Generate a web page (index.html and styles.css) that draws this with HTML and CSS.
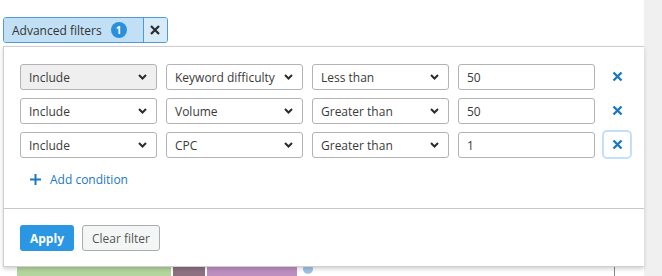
FILE: index.html
```html
<!DOCTYPE html>
<html lang="en">
<head>
    <meta charset="UTF-8">
    <title>Advanced filters</title>
    <link rel="stylesheet" href="styles.css">
</head>
<body>
    <div class="page">
        <div class="main">
            <div class="tag">
                <span class="tag-label">Advanced filters <span class="badge">1</span></span>
                <button class="tag-close" aria-label="Remove">
                    <svg width="10" height="10" viewBox="0 0 10 10"><path d="M1 1l8 8M9 1l-8 8" stroke="#2b2b2b" stroke-width="2.2"/></svg>
                </button>
            </div>

            <!-- content under the dropdown -->
            <div class="behind">
                <div class="chart">
                    <div class="bar bar-green"></div>
                    <div class="bar bar-mauve"></div>
                    <div class="bar bar-purple"></div>
                    <div class="dot"></div>
                </div>
                <div class="tick"></div>
            </div>

            <div class="panel">
                <div class="conditions">
                    <div class="row">
                        <div class="select hover"><span>Include</span><svg class="chev" width="9" height="6" viewBox="0 0 9 6"><path d="M1 1l3.5 3.5L8 1" fill="none" stroke="#2b2b2b" stroke-width="2"/></svg></div>
                        <div class="select"><span>Keyword difficulty</span><svg class="chev" width="9" height="6" viewBox="0 0 9 6"><path d="M1 1l3.5 3.5L8 1" fill="none" stroke="#2b2b2b" stroke-width="2"/></svg></div>
                        <div class="select"><span>Less than</span><svg class="chev" width="9" height="6" viewBox="0 0 9 6"><path d="M1 1l3.5 3.5L8 1" fill="none" stroke="#2b2b2b" stroke-width="2"/></svg></div>
                        <div class="input">50</div>
                        <button class="remove"><svg width="11" height="11" viewBox="0 0 11 11"><path d="M1.5 1.5l8 8M9.5 1.5l-8 8" stroke="#1a78c2" stroke-width="2.4"/></svg></button>
                    </div>
                    <div class="row">
                        <div class="select"><span>Include</span><svg class="chev" width="9" height="6" viewBox="0 0 9 6"><path d="M1 1l3.5 3.5L8 1" fill="none" stroke="#2b2b2b" stroke-width="2"/></svg></div>
                        <div class="select"><span>Volume</span><svg class="chev" width="9" height="6" viewBox="0 0 9 6"><path d="M1 1l3.5 3.5L8 1" fill="none" stroke="#2b2b2b" stroke-width="2"/></svg></div>
                        <div class="select"><span>Greater than</span><svg class="chev" width="9" height="6" viewBox="0 0 9 6"><path d="M1 1l3.5 3.5L8 1" fill="none" stroke="#2b2b2b" stroke-width="2"/></svg></div>
                        <div class="input">50</div>
                        <button class="remove"><svg width="11" height="11" viewBox="0 0 11 11"><path d="M1.5 1.5l8 8M9.5 1.5l-8 8" stroke="#1a78c2" stroke-width="2.4"/></svg></button>
                    </div>
                    <div class="row">
                        <div class="select"><span>Include</span><svg class="chev" width="9" height="6" viewBox="0 0 9 6"><path d="M1 1l3.5 3.5L8 1" fill="none" stroke="#2b2b2b" stroke-width="2"/></svg></div>
                        <div class="select"><span>CPC</span><svg class="chev" width="9" height="6" viewBox="0 0 9 6"><path d="M1 1l3.5 3.5L8 1" fill="none" stroke="#2b2b2b" stroke-width="2"/></svg></div>
                        <div class="select"><span>Greater than</span><svg class="chev" width="9" height="6" viewBox="0 0 9 6"><path d="M1 1l3.5 3.5L8 1" fill="none" stroke="#2b2b2b" stroke-width="2"/></svg></div>
                        <div class="input">1</div>
                        <button class="remove focused"><svg width="11" height="11" viewBox="0 0 11 11"><path d="M1.5 1.5l8 8M9.5 1.5l-8 8" stroke="#1a78c2" stroke-width="2.4"/></svg></button>
                    </div>
                    <button class="add">
                        <svg width="11" height="11" viewBox="0 0 11 11"><path d="M5.5 0v11M0 5.5h11" stroke="#1a78c2" stroke-width="2"/></svg>
                        Add condition
                    </button>
                </div>
                <div class="footer">
                    <button class="btn btn-primary">Apply</button>
                    <button class="btn btn-default">Clear filter</button>
                </div>
            </div>
        </div>
        <div class="side"></div>
    </div>
</body>
</html>
```

FILE: styles.css
```css
body {
    margin: 0;
    font-family: 'Open Sans', sans-serif;
    font-size: 12px;
    color: #333;
    background-color: #ffffff;
}

button {
    font-family: inherit;
    cursor: pointer;
}

.page {
    display: flex;
    height: 276px;
    overflow: hidden;
}

.main {
    position: relative;
    width: 644px;
    flex: none;
}

.side {
    flex: 1;
    background-color: #f0f0f0;
}

/* tag */

.tag {
    display: inline-flex;
    margin: 17px 0 0 3px;
    height: 26px;
    border: 1px solid #4d9bd6;
    border-radius: 3px;
    box-sizing: border-box;
    overflow: hidden;
}

.tag-label {
    display: flex;
    align-items: center;
    gap: 9px;
    padding: 0 16px 0 8px;
    background-color: #c2e0f5;
    color: #333;
}

.badge {
    display: inline-flex;
    align-items: center;
    justify-content: center;
    width: 16px;
    height: 16px;
    border-radius: 50%;
    background-color: #2a90dc;
    color: #ffffff;
    font-size: 10px;
    font-weight: 700;
}

.tag-close {
    width: 24px;
    border: none;
    border-left: 1px solid #4d9bd6;
    background-color: #d6eaf8;
    display: flex;
    align-items: center;
    justify-content: center;
    padding: 0;
}

/* behind */

.behind {
    position: absolute;
    left: 0;
    right: 0;
    top: 258px;
    height: 18px;
}

.chart {
    display: flex;
    gap: 2px;
    margin-left: 17px;
    height: 18px;
}

.bar {
    height: 18px;
}

.bar-green {
    width: 154px;
    background-color: #b4d69e;
}

.bar-mauve {
    width: 32px;
    background-color: #8e7181;
}

.bar-purple {
    width: 90px;
    background-color: #bd8fc1;
}

.dot {
    width: 10px;
    height: 10px;
    border-radius: 50%;
    background-color: #9ec3e8;
    margin: 6px 0 0 4px;
}

.tick {
    position: absolute;
    left: 614px;
    top: 8px;
    width: 1px;
    height: 12px;
    background-color: #888;
}

/* panel */

.panel {
    position: absolute;
    top: 46px;
    left: 3px;
    width: 641px;
    height: 221px;
    box-sizing: border-box;
    background-color: #ffffff;
    border: 1px solid #cfcfcf;
    border-right: none;
    box-shadow: 0 2px 4px rgba(0, 0, 0, 0.18);
}

.conditions {
    padding: 17px 0 19px 16px;
    border-bottom: 1px solid #c8c8c8;
}

.row {
    display: flex;
    gap: 9px;
    margin-bottom: 8px;
    height: 26px;
}

.select,
.input {
    width: 137px;
    height: 26px;
    box-sizing: border-box;
    border: 1px solid #b3b3b3;
    border-radius: 3px;
    padding: 0 8px;
    display: flex;
    align-items: center;
    color: #3a3a3a;
    background-color: #ffffff;
}

.select {
    justify-content: space-between;
}

.select .chev {
    margin-right: 1px;
}

.select.hover {
    background-color: #efefef;
}

.remove {
    width: 30px;
    height: 29px;
    margin: -2px 0 0 -2px;
    border: 2px solid transparent;
    border-radius: 5px;
    background: none;
    display: flex;
    align-items: center;
    justify-content: center;
    padding: 0;
}

.remove.focused {
    border-color: #c4e0f6;
}

.add {
    display: flex;
    align-items: center;
    gap: 9px;
    height: 20px;
    margin: 11px 0 0 10px;
    padding: 0;
    border: none;
    background: none;
    color: #1a78c2;
    font-size: 12px;
}

.footer {
    padding: 16px;
    display: flex;
    gap: 8px;
}

.btn {
    height: 26px;
    border-radius: 3px;
    font-size: 12px;
    padding: 0 9px;
}

.btn-primary {
    border: none;
    background-color: #2b96e1;
    color: #ffffff;
    font-weight: 700;
    padding: 0 10px;
}

.btn-default {
    border: 1px solid #a9adae;
    background-color: #f4f5f5;
    color: #555;
}
```
